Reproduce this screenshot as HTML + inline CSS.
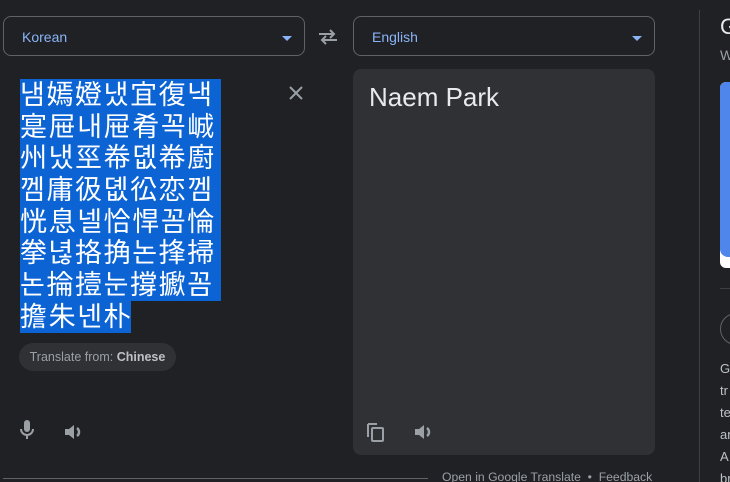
<!DOCTYPE html>
<html><head><meta charset="utf-8"><style>
html,body{margin:0;width:730px;height:482px;background:#202124;overflow:hidden;font-family:"Liberation Sans",Arial,sans-serif;position:relative}
.sel{position:absolute;border:1px solid #5f6368;border-radius:8px;height:40px;box-sizing:border-box;top:16px}
.sel span{position:absolute;left:18px;top:12px;font-size:14px;color:#8ab4f8}
.sel i{position:absolute;right:12px;top:19px;width:0;height:0;border-left:5px solid transparent;border-right:5px solid transparent;border-top:5px solid #8ab4f8}
.src{position:absolute;left:20px;top:79px;width:206px;font-family:"Noto Sans CJK KR","Noto Sans CJK SC",sans-serif;font-size:27px;line-height:31.7px;color:#fff;letter-spacing:1.6px}
.src div{height:31.7px;background:#0b63d4;overflow:hidden;white-space:nowrap;line-height:28px}
.out{position:absolute;left:353px;top:69px;width:302px;height:386px;background:#303134;border-radius:8px}
</style></head><body>
<div class="sel" style="left:3px;width:302px"><span>Korean</span><i></i></div>
<svg style="position:absolute;left:317px;top:27px" width="22" height="20" viewBox="0 0 22 20"><path d="M2 7h15M13 3l4 4-4 4M20 13H5M9 9l-4 4 4 4" stroke="#9aa0a6" stroke-width="2" fill="none"/></svg>
<div class="sel" style="left:353px;width:302px"><span>English</span><i></i></div>
<div class="src"><div style="width:201px">냄嫣嬁냈宜復낵</div><div style="width:201px">寔屉내屉肴꼭峸</div><div style="width:201px">州냈巠帣뎺帣廚</div><div style="width:201px">껨庸彶뎺彸恋껨</div><div style="width:201px">恍息넬恰悍꼼惀</div><div style="width:201px">拳녆挌捔논捀掃</div><div style="width:201px">논掄撎눈撐擨꼼</div><div style="width:111px">擔朱넨朴</div></div>
<svg style="position:absolute;left:287px;top:84px" width="18" height="18"><path d="M3 3l12 12M15 3L3 15" stroke="#9aa0a6" stroke-width="2"/></svg>
<div style="position:absolute;left:19px;top:343px;width:157px;height:28px;border-radius:14px;background:#303134;font-size:12.5px;color:#9aa0a6;line-height:28px;text-align:center">Translate from: <b style="color:#bdc1c6">Chinese</b></div>
<svg style="position:absolute;left:18px;top:420px" width="18" height="22" viewBox="0 0 18 22"><rect x="6" y="0" width="6" height="12" rx="3" fill="#9aa0a6"/><path d="M3 9a6 6 0 0 0 12 0M9 15v4" stroke="#9aa0a6" stroke-width="2" fill="none"/></svg>
<svg style="position:absolute;left:64px;top:422px" width="20" height="20" viewBox="0 0 20 20"><path d="M1 7h4l5-4v14l-5-4H1z" fill="#9aa0a6"/><path d="M13 6a5 5 0 0 1 0 8" stroke="#9aa0a6" stroke-width="2.5" fill="none"/></svg>
<div style="position:absolute;left:3px;top:478px;width:425px;height:1px;background:#5f6368"></div>
<div class="out"><div style="position:absolute;left:16px;top:13px;font-size:26px;color:#e8eaed">Naem Park</div>
<svg style="position:absolute;left:13px;top:352px" width="20" height="22" viewBox="0 0 20 22"><path d="M2 3v13M2 3h9" stroke="#9aa0a6" stroke-width="2" fill="none"/><rect x="6" y="7" width="11" height="13" rx="1" stroke="#9aa0a6" stroke-width="2" fill="none"/></svg>
<svg style="position:absolute;left:61px;top:353px" width="20" height="20" viewBox="0 0 20 20"><path d="M1 7h4l5-4v14l-5-4H1z" fill="#9aa0a6"/><path d="M13 6a5 5 0 0 1 0 8" stroke="#9aa0a6" stroke-width="2.5" fill="none"/></svg>
</div>
<div style="position:absolute;left:442px;top:470px;font-size:12.2px;color:#9aa0a6;white-space:nowrap">Open in Google Translate &nbsp;•&nbsp; Feedback</div>
<div style="position:absolute;left:699px;top:10px;width:1px;height:472px;background:#3c4043"></div>
<div style="position:absolute;left:720px;top:14px;font-size:22px;color:#e8eaed">G</div>
<div style="position:absolute;left:720px;top:47px;font-size:14px;color:#9aa0a6">W</div>
<div style="position:absolute;left:720px;top:82px;width:20px;height:186px;background:#fff;border-radius:6px 0 0 6px;overflow:hidden"><div style="height:175px;background:#4f86ec;border-radius:0 0 0 8px"></div></div>
<div style="position:absolute;left:720px;top:288px;width:20px;height:1px;background:#3c4043"></div>
<div style="position:absolute;left:720px;top:313px;width:30px;height:30px;border:1px solid #5f6368;border-radius:50%"></div>
<div style="position:absolute;left:720px;top:358px;font-size:13px;line-height:22px;color:#bdc1c6">G<br>tr<br>te<br>ar<br>A<br>br</div>
</body></html>
